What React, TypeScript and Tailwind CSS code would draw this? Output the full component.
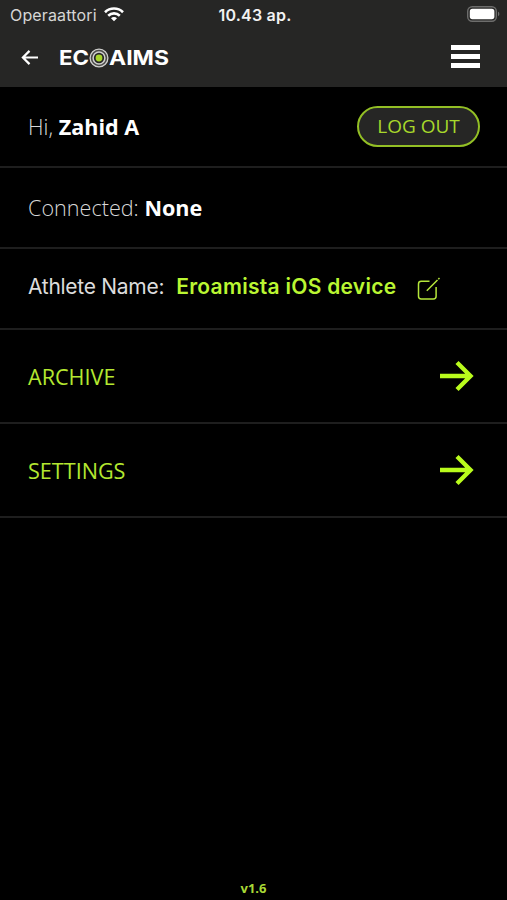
import React from "react";

function Wifi() {
  return (
    <svg width="20" height="15" viewBox="0 0 20 15" fill="none" stroke="#fff" strokeWidth="2.6">
      <path d="M1 5.2C6 .3 14 .3 19 5.2" />
      <path d="M4.2 8.7C7.5 5.6 12.5 5.6 15.8 8.7" />
      <path d="M10 14.2l-3-3c1.6-1.5 4.4-1.5 6 0z" fill="#fff" stroke="none" />
    </svg>
  );
}

function Battery() {
  return (
    <svg width="33" height="16" viewBox="0 0 33 16" fill="none">
      <rect x="0.7" y="0.7" width="28.6" height="14.6" rx="4.5" stroke="#6d6d6c" strokeWidth="1.4" />
      <rect x="2.8" y="2.8" width="24.6" height="10.4" rx="2.6" fill="#fff" />
      <path d="M31 5.8c1.8.6 1.8 3.8 0 4.4z" fill="#6d6d6c" />
    </svg>
  );
}

function Logo() {
  return (
    <svg width="116" height="34" viewBox="-2 -6 116 34" className="font-['Inter',sans-serif] font-bold" fill="#fff">
      <text x="0" y="18" fontSize="20" textLength="30" lengthAdjust="spacingAndGlyphs">EC</text>
      <circle cx="40" cy="11" r="8.9" fill="#4a4a48" stroke="#cfcfcd" strokeWidth="1.3" />
      <circle cx="40" cy="11" r="5.9" fill="#262625" stroke="#cfcfcd" strokeWidth="1.5" />
      <circle cx="40" cy="11" r="3.4" fill="#a6d52b" />
      <text x="50" y="18" fontSize="20" textLength="60" lengthAdjust="spacingAndGlyphs">AIMS</text>
    </svg>
  );
}

function ArrowRight() {
  return (
    <svg width="34" height="32" viewBox="0 0 34 32" fill="none" stroke="#b9fb1c" strokeWidth="4.4">
      <path d="M0 16h30M17 2.5L30.5 16L17 29.5" />
    </svg>
  );
}

function EditIcon() {
  return (
    <svg width="24" height="24" viewBox="0 0 24 24" fill="none" stroke="#b4e63a" strokeWidth="1.5">
      <path d="M12.5 4.3H4.2Q1.5 4.3 1.5 7v12.2q0 2.7 2.7 2.7h12.2q2.7 0 2.7-2.7V10" />
      <path d="M9.8 13.7L20.5 3M21.3 2.2l1.2-1.2" />
    </svg>
  );
}

function MenuRow({ label }: { label: string }) {
  return (
    <button
      type="button"
      className="flex h-[94px] w-full items-center justify-between border-b-2 border-[#1e1e1e] pl-7 pr-[33px] text-left text-[21.6px] text-[#b4e830]"
    >
      <span className="pt-0.5">{label}</span>
      <ArrowRight />
    </button>
  );
}

function App() {
  return (
    <div className="flex h-[900px] w-[507px] flex-col overflow-hidden bg-black font-['Open_Sans',sans-serif] text-white">
      <header className="h-[87px] bg-[#262625]">
        <div className="grid h-[29px] grid-cols-3 items-center pl-2.5 pr-[7px] font-['Inter',sans-serif] text-base">
          <div className="flex items-center gap-[7px] text-[#d6d6d5]">
            <span className="tracking-[0.15px]">Operaattori</span>
            <Wifi />
          </div>
          <span className="text-center font-semibold tracking-[0.2px] text-[#f2f2f2]">10.43 ap.</span>
          <div className="flex justify-end pb-0.5">
            <Battery />
          </div>
        </div>
        <div className="flex h-[57px] items-center pl-[21px] pr-[27px]">
          <svg width="18" height="16" viewBox="0 0 18 16" fill="none" stroke="#fff" strokeWidth="2.2">
            <path d="M17 7.5H2M8.5 .9L1.9 7.5l6.6 6.6" />
          </svg>
          <div className="ml-[18px]">
            <Logo />
          </div>
          <div className="ml-auto flex w-[29px] flex-col gap-[4.5px] pb-0.5">
            <span className="h-[4.5px] bg-white" />
            <span className="h-[4.5px] bg-white" />
            <span className="h-[4.5px] bg-white" />
          </div>
        </div>
      </header>

      <div className="flex h-[81px] items-center justify-between border-b-2 border-[#1e1e1e] pl-7 pr-[27px] text-[21.6px]">
        <div className="pt-0.5">
          <span className="font-light text-[#d8d8d8]">Hi, </span>
          <span className="font-bold">Zahid A</span>
        </div>
        <button
          type="button"
          className="mb-px h-[41px] w-[123px] rounded-full border-2 border-[#93bf25] bg-[#262625] text-[19px] text-[#a8d92b]"
        >
          LOG OUT
        </button>
      </div>

      <div className="flex h-[81px] items-center border-b-2 border-[#1e1e1e] px-7 text-[21.6px]">
        <div className="pt-0.5">
          <span className="font-light text-[#d8d8d8]">Connected: </span>
          <span className="font-bold">None</span>
        </div>
      </div>

      <div className="flex h-[81px] items-center border-b-2 border-[#1e1e1e] px-7 font-['Inter',sans-serif] text-[21px]">
        <span className="pb-[3px] tracking-[-0.28px] text-[#dcdcdc]">Athlete Name:</span>
        <span className="ml-3 pb-[3px] font-semibold tracking-[0.28px] text-[#baf632]">Eroamista iOS device</span>
        <div className="ml-[21px]">
          <EditIcon />
        </div>
      </div>

      <MenuRow label="ARCHIVE" />
      <MenuRow label="SETTINGS" />

      <div className="mt-auto pb-[3px] text-center text-[13px] leading-[18px] font-bold text-[#a8d936]">v1.6</div>
    </div>
  );
}

export default App;
